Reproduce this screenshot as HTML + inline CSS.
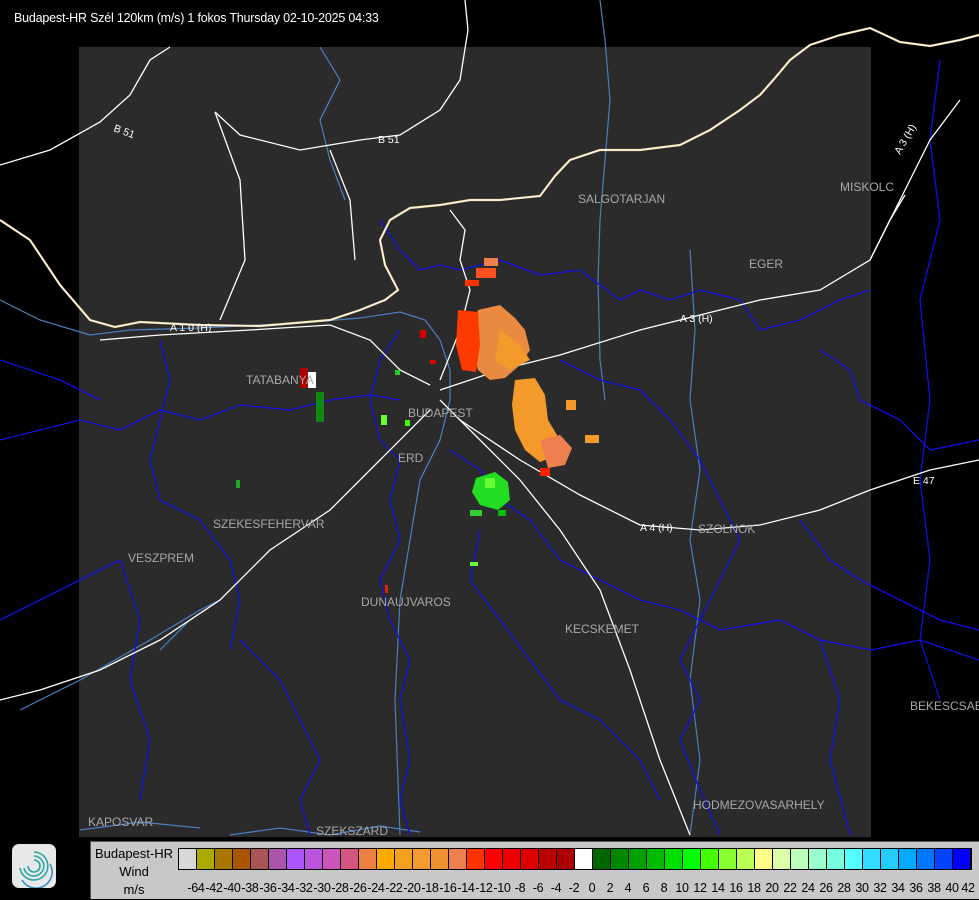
<!DOCTYPE html>
<html><head><meta charset="utf-8"><style>
html,body{margin:0;padding:0;background:#000;width:979px;height:900px;overflow:hidden;font-family:"Liberation Sans",sans-serif}
svg{position:absolute;left:0;top:0}
.t{position:absolute;left:14px;top:11px;color:#fff;font-size:12.5px;letter-spacing:-0.2px}
.leg{position:absolute;left:90px;top:841px;width:889px;height:57px;background:#c8c8c8;border-top:1px solid #555;border-left:1px solid #555}
.lt{position:absolute;left:0;width:86px;text-align:center;font-size:13px;color:#000}
.bar{position:absolute;left:87px;top:6px;height:20px;display:flex;border:1px solid #000}
.bar div{width:17px;height:20px;border-right:1px solid #000}
.lab{position:absolute;top:40px;font-size:12.5px;color:#000;transform:translateX(-50%);letter-spacing:-0.3px}
.logo{position:absolute;left:12px;top:844px;width:44px;height:44px;border-radius:7px;background:#e8e8e8}
</style></head><body>
<svg width="979" height="900" viewBox="0 0 979 900">
<rect x="79" y="47" width="792" height="790" fill="#2b2b2b"/>
<g fill="none" stroke="#4a7fc0" stroke-width="1.2">
<path d="M0,300 L40,320 L90,335 L130,330 L200,328 L300,323 L360,318 L400,312 L425,320 L440,340 L450,370 L450,400 L440,440 L420,480 L410,540 L400,600 L395,700 L400,835"/>
<path d="M600,0 L605,40 L610,100 L605,160 L600,220 L598,280 L600,360 L605,400"/>
<path d="M690,250 L695,330 L690,400 L700,470 L690,540 L700,600 L690,680 L700,760 L690,835"/>
<path d="M160,650 L190,620 L220,600 L200,610 L150,640 L80,680 L20,710"/>
<path d="M320,47 L340,80 L320,120 L330,160 L345,200"/>
<path d="M230,835 L280,828 L330,835 L380,826 L420,832"/>
<path d="M80,830 L140,822 L200,828"/>
</g>
<g fill="none" stroke="#1010e0" stroke-width="1.3">
<path d="M0,440 L40,430 L80,420 L120,430 L160,410 L200,420 L240,405 L290,410 L330,400 L370,395 L400,400"/>
<path d="M380,220 L400,250 L420,270 L440,265 L460,270 L500,260 L540,275 L580,270 L620,300 L640,290 L670,300 L700,290 L740,300 L760,330 L800,320 L840,300 L870,290"/>
<path d="M160,340 L170,380 L160,420 L150,460 L160,500 L200,520 L230,560 L240,600 L230,650"/>
<path d="M400,330 L380,360 L370,400 L380,440 L400,460 L390,500 L400,540 L380,580 L390,620 L410,660 L400,700 L410,760 L400,800 L410,835"/>
<path d="M450,450 L480,470 L500,500 L530,520 L560,560 L600,580 L640,600 L680,610 L720,630 L780,620 L820,640 L871,650 L920,640 L979,660"/>
<path d="M560,360 L600,380 L640,390 L670,420 L700,460 L720,500 L740,540 L720,580 L700,620 L680,660 L700,700 L680,740 L700,790 L720,835"/>
<path d="M820,350 L850,370 L860,400 L900,420 L930,450 L979,440"/>
<path d="M240,640 L280,680 L300,720 L320,760 L300,800 L310,835"/>
<path d="M0,620 L40,600 L80,580 L120,560"/>
<path d="M940,60 L930,140 L940,220 L920,300 L930,400 L920,480 L930,560 L920,640 L940,700"/>
<path d="M120,560 L140,620 L130,680 L150,740 L140,800"/>
<path d="M0,360 L60,380 L100,400"/>
<path d="M480,530 L470,580 L500,620 L530,660 L560,700 L600,720 L640,760 L660,800"/>
<path d="M800,520 L830,560 L860,580 L900,600 L940,620 L979,630"/>
<path d="M820,640 L840,700 L830,760 L850,835"/>
</g>
<g fill="none" stroke="#fff" stroke-width="1.3">
<path d="M215,112 L240,135 L300,150 L360,140 L400,135 L440,110 L460,80 L468,30 L465,0"/>
<path d="M0,165 L50,150 L100,122 L130,95 L150,60 L170,47"/>
<path d="M215,112 L240,180 L245,260 L220,320"/>
<path d="M100,340 L160,335 L250,330 L330,325 L370,340 L400,370 L430,385"/>
<path d="M440,390 L500,370 L560,355 L640,330 L700,315 L760,300 L820,290 L870,260 L890,220 L905,195"/>
<path d="M440,400 L480,440 L520,480 L560,530 L600,590 L630,670 L660,760 L690,835"/>
<path d="M460,420 L520,460 L580,495 L640,525 L700,530 L760,525 L820,510 L870,490 L930,470 L979,460"/>
<path d="M430,410 L380,460 L330,510 L270,550 L220,600 L160,640 L100,670 L40,690 L0,700"/>
<path d="M440,380 L460,330 L470,290 L460,260 L465,230 L450,210"/>
<path d="M870,260 L900,200 L930,140 L960,100"/>
<path d="M330,150 L350,200 L355,260"/>
</g>
<path d="M0,220 L30,240 L60,285 L90,320 L115,327 L140,322 L200,325 L260,326 L330,320 L360,310 L385,300 L398,290 L385,265 L380,240 L390,220 L410,208 L440,205 L470,200 L500,200 L540,196 L555,176 L570,160 L600,150 L640,150 L680,145 L710,130 L740,110 L760,95 L775,78 L790,60 L810,45 L840,35 L870,28 L900,42 L930,46 L960,40 L979,35" fill="none" stroke="#f3d9a6" stroke-width="2.2"/>
<path d="M0,220 L30,240 L60,285 L90,320 L115,327 L140,322 L200,325 L260,326 L330,320 L360,310 L385,300 L398,290 L385,265 L380,240 L390,220 L410,208 L440,205 L470,200 L500,200 L540,196 L555,176 L570,160 L600,150 L640,150 L680,145 L710,130 L740,110 L760,95 L775,78 L790,60 L810,45 L840,35 L870,28 L900,42 L930,46 L960,40 L979,35" fill="none" stroke="#fff" stroke-width="0.8"/>
<g>
<path d="M478,310 L500,305 L515,318 L525,330 L530,350 L520,365 L505,378 L490,380 L478,370 L470,345 Z" fill="#ea8a40"/>
<path d="M500,330 L520,345 L530,360 L510,370 L495,360 Z" fill="#f39a2a"/>
<path d="M515,380 L535,378 L545,395 L548,420 L560,440 L558,455 L540,462 L525,450 L515,430 L512,405 Z" fill="#f39a2a"/>
<path d="M540,440 L560,435 L572,448 L565,465 L548,468 Z" fill="#ee8050"/>
<path d="M458,310 L478,312 L480,345 L476,372 L462,370 L456,345 Z" fill="#ff3a00"/>
<rect x="476" y="268" width="20" height="10" fill="#ff5020"/>
<rect x="484" y="258" width="14" height="8" fill="#ee8050"/>
<rect x="465" y="280" width="14" height="6" fill="#ff3300"/>
<rect x="566" y="400" width="10" height="10" fill="#f39a2a"/>
<rect x="585" y="435" width="14" height="8" fill="#f39a2a"/>
<rect x="540" y="468" width="10" height="8" fill="#ff2000"/>
<rect x="420" y="330" width="6" height="8" fill="#dd0000"/>
<rect x="430" y="360" width="6" height="4" fill="#dd0000"/>
<path d="M476,478 L495,472 L508,482 L510,500 L498,510 L480,505 L472,492 Z" fill="#22dd22"/>
<rect x="485" y="478" width="10" height="10" fill="#66ff33"/>
<rect x="470" y="510" width="12" height="6" fill="#33cc33"/>
<rect x="498" y="510" width="8" height="6" fill="#00bb00"/>
<rect x="300" y="368" width="8" height="20" fill="#aa0000"/>
<rect x="308" y="372" width="8" height="16" fill="#ffffff"/>
<rect x="316" y="392" width="8" height="30" fill="#118811"/>
<rect x="381" y="415" width="6" height="10" fill="#66ff33"/>
<rect x="405" y="420" width="5" height="6" fill="#44ff00"/>
<rect x="395" y="370" width="5" height="5" fill="#22cc22"/>
<rect x="236" y="480" width="4" height="8" fill="#22aa22"/>
<rect x="470" y="562" width="8" height="4" fill="#66ff33"/>
<rect x="385" y="585" width="3" height="8" fill="#dd2200"/>
</g>
<g font-family="Liberation Sans,sans-serif" font-size="12" fill="#a8a8a8">
<text x="246" y="384">TATABANYA</text><text x="408" y="417">BUDAPEST</text><text x="398" y="462">ERD</text>
<text x="213" y="528">SZEKESFEHERVAR</text><text x="128" y="562">VESZPREM</text><text x="361" y="606">DUNAUJVAROS</text>
<text x="565" y="633">KECSKEMET</text><text x="698" y="533">SZOLNOK</text><text x="578" y="203">SALGOTARJAN</text>
<text x="749" y="268">EGER</text><text x="840" y="191">MISKOLC</text><text x="910" y="710">BEKESCSABA</text>
<text x="693" y="809">HODMEZOVASARHELY</text><text x="88" y="826">KAPOSVAR</text><text x="316" y="835">SZEKSZARD</text>
</g>
<g font-family="Liberation Sans,sans-serif" font-size="10.5" fill="#fff">
<text x="113" y="131" transform="rotate(20 113 131)">B 51</text><text x="378" y="143">B 51</text>
<text x="170" y="331">A 1 0 (H)</text><text x="680" y="322">A 3 (H)</text><text x="640" y="531">A 4 (H)</text>
<text x="913" y="484">E 47</text><text x="900" y="155" transform="rotate(-60 900 155)">A 3 (H)</text>
</g>
</svg>
<div class="t">Budapest-HR Szél 120km (m/s) 1 fokos Thursday 02-10-2025 04:33</div>
<div class="logo"><svg width="44" height="44" viewBox="0 0 44 44" style="position:absolute;left:0;top:0">
<g fill="none" stroke="#2aa8a0" stroke-width="1.6"><path d="M22,8 A14,14 0 1 1 8,24"/><path d="M22,12 A10,10 0 1 1 12,24"/><path d="M22,16 A6,6 0 1 1 16,22"/><path d="M10,36 A16,16 0 0 0 38,20" stroke="#3a8fc0"/></g></svg></div>
<div class="leg">
<div class="lt" style="top:4px">Budapest-HR</div><div class="lt" style="top:22px">Wind</div><div class="lt" style="top:40px">m/s</div>
<div class="bar">
<div style="background:#d8d8d8"></div><div style="background:#aaaa00"></div><div style="background:#aa7700"></div><div style="background:#aa5500"></div><div style="background:#aa5555"></div><div style="background:#aa55aa"></div><div style="background:#aa55ff"></div><div style="background:#bb55dd"></div><div style="background:#cc55bb"></div><div style="background:#d45580"></div><div style="background:#ee8044"></div><div style="background:#ffaa00"></div><div style="background:#f5a020"></div><div style="background:#f59a30"></div><div style="background:#f09030"></div><div style="background:#ee8050"></div><div style="background:#ff3300"></div><div style="background:#ff0000"></div><div style="background:#ee0000"></div><div style="background:#dd0000"></div><div style="background:#bb0000"></div><div style="background:#aa0000"></div><div style="background:#ffffff"></div><div style="background:#006600"></div><div style="background:#008800"></div><div style="background:#00a000"></div><div style="background:#00bb00"></div><div style="background:#00dd00"></div><div style="background:#00ff00"></div><div style="background:#44ff00"></div><div style="background:#88ff33"></div><div style="background:#bbff55"></div><div style="background:#ffff88"></div><div style="background:#ddffaa"></div><div style="background:#bbffbb"></div><div style="background:#99ffcc"></div><div style="background:#77ffdd"></div><div style="background:#55ffff"></div><div style="background:#33ddff"></div><div style="background:#22ccff"></div><div style="background:#00aaff"></div><div style="background:#0077ff"></div><div style="background:#0044ff"></div><div style="background:#0000ff"></div>
</div>
</div>
<div style="position:absolute;left:90px;top:841px">
<span class="lab" style="left:106px">-64</span><span class="lab" style="left:124px">-42</span><span class="lab" style="left:142px">-40</span><span class="lab" style="left:160px">-38</span><span class="lab" style="left:178px">-36</span><span class="lab" style="left:196px">-34</span><span class="lab" style="left:214px">-32</span><span class="lab" style="left:232px">-30</span><span class="lab" style="left:250px">-28</span><span class="lab" style="left:268px">-26</span><span class="lab" style="left:286px">-24</span><span class="lab" style="left:304px">-22</span><span class="lab" style="left:322px">-20</span><span class="lab" style="left:340px">-18</span><span class="lab" style="left:358px">-16</span><span class="lab" style="left:376px">-14</span><span class="lab" style="left:394px">-12</span><span class="lab" style="left:412px">-10</span><span class="lab" style="left:430px">-8</span><span class="lab" style="left:448px">-6</span><span class="lab" style="left:466px">-4</span><span class="lab" style="left:484px">-2</span><span class="lab" style="left:502px">0</span><span class="lab" style="left:520px">2</span><span class="lab" style="left:538px">4</span><span class="lab" style="left:556px">6</span><span class="lab" style="left:574px">8</span><span class="lab" style="left:592px">10</span><span class="lab" style="left:610px">12</span><span class="lab" style="left:628px">14</span><span class="lab" style="left:646px">16</span><span class="lab" style="left:664px">18</span><span class="lab" style="left:682px">20</span><span class="lab" style="left:700px">22</span><span class="lab" style="left:718px">24</span><span class="lab" style="left:736px">26</span><span class="lab" style="left:754px">28</span><span class="lab" style="left:772px">30</span><span class="lab" style="left:790px">32</span><span class="lab" style="left:808px">34</span><span class="lab" style="left:826px">36</span><span class="lab" style="left:844px">38</span><span class="lab" style="left:862px">40</span><span class="lab" style="left:878px">42</span>
</div>
</body></html>
